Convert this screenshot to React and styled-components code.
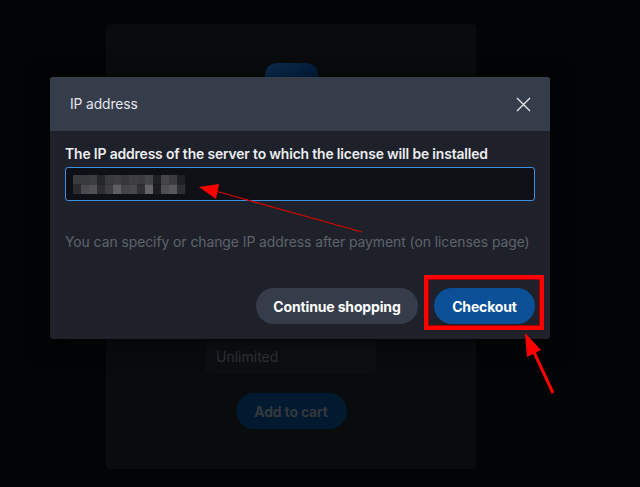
import React from "react";
import styled, { createGlobalStyle } from "styled-components";

const Global = createGlobalStyle`
  html, body {
    margin: 0;
    padding: 0;
    background: #030405;
  }
  body {
    font-family: Inter, "Noto Sans", sans-serif;
  }
`;

const Page = styled.div`
  position: relative;
  width: 640px;
  height: 487px;
  overflow: hidden;
  background: #030405;
  padding: 24px 0 0 106px;
  box-sizing: border-box;
`;

/* product card behind the dialog */
const ProductCard = styled.div`
  width: 370px;
  height: 445px;
  box-sizing: border-box;
  padding: 39px 0 40px;
  background: #0a0b0d;
  border-radius: 4px;
  display: flex;
  flex-direction: column;
  align-items: center;
`;

const ProductIcon = styled.div`
  width: 53px;
  height: 53px;
  border-radius: 12px;
  background: linear-gradient(135deg, #0b2c4e 0%, #021d3b 60%, #00163a 100%);
`;

const Spacer = styled.div`
  flex: 1;
`;

const PeriodField = styled.div`
  width: 170px;
  height: 33px;
  box-sizing: border-box;
  padding: 0 10px;
  border-radius: 4px;
  background: #0d0f12;
  color: #2f3236;
  font-size: 14px;
  display: flex;
  align-items: center;
`;

const CartButton = styled.button`
  margin-top: 20px;
  width: 111px;
  height: 36px;
  border: none;
  border-radius: 18px;
  background: #021a30;
  color: #33383f;
  font-family: inherit;
  font-size: 14px;
  font-weight: 700;
  letter-spacing: -0.2px;
`;

/* dialog */
const Dialog = styled.div`
  position: absolute;
  left: 50px;
  top: 77px;
  width: 500px;
  border-radius: 3px;
  background: #1e2129;
  box-shadow: 0 4px 24px rgba(0, 0, 0, 0.5);
`;

const DialogHeader = styled.div`
  height: 54px;
  box-sizing: border-box;
  padding: 0 19px 0 20px;
  background: #353c4a;
  border-radius: 3px 3px 0 0;
  display: flex;
  align-items: center;
  justify-content: space-between;
`;

const DialogTitle = styled.div`
  color: #e4e7ec;
  font-size: 13.8px;
  letter-spacing: -0.1px;
`;

const CloseButton = styled.button`
  width: 16px;
  height: 16px;
  padding: 0;
  border: none;
  background: none;
  display: flex;
  align-items: center;
  justify-content: center;
`;

const DialogBody = styled.div`
  position: relative;
  padding: 14px 15px 15px;
  display: flex;
  flex-direction: column;
`;

const FieldLabel = styled.label`
  color: #eceef2;
  font-size: 13.9px;
  font-weight: 600;
  line-height: 18px;
  letter-spacing: -0.15px;
  margin-bottom: 4px;
`;

const IpInput = styled.div`
  height: 34px;
  box-sizing: border-box;
  padding: 0 7px;
  border: 1px solid #3d8fe3;
  border-radius: 3px;
  background: #0e1015;
  display: flex;
  align-items: center;
`;

const Hint = styled.div`
  margin-top: 32px;
  color: #5e636d;
  font-size: 13.9px;
  line-height: 18px;
  letter-spacing: -0.05px;
`;

const Actions = styled.div`
  margin-top: 37px;
  display: flex;
  justify-content: flex-end;
  gap: 16px;
`;

const PillButton = styled.button`
  height: 36px;
  padding: 0 16px;
  min-width: ${(p) => (p.primary ? "101px" : "162px")};
  border: none;
  border-radius: 18px;
  background: ${(p) => (p.primary ? "#0b4f97" : "#353c4a")};
  color: #ffffff;
  font-family: inherit;
  font-size: 14px;
  font-weight: 700;
  letter-spacing: -0.15px;
`;

/* annotations drawn over the screenshot */
const HighlightBox = styled.div`
  position: absolute;
  right: 6px;
  bottom: 9px;
  width: 120px;
  height: 55px;
  box-sizing: border-box;
  border: 4px solid #ff0000;
  box-shadow: inset 0 0 0 1px #a40000;
  pointer-events: none;
`;

const Overlay = styled.svg`
  position: absolute;
  left: 0;
  top: 0;
  pointer-events: none;
`;

const blocks = [
  ["#3a3b3f", "#38393d", "#3d3d41", "#252629", "#3b3b3f", "#3e3e42", "#38383c", "#3f3f43", "#3c3c40", "#444448", "#1f2023", "#45454a", "#3b3b3f", "#1f2024"],
  ["#2b2b2e", "#4b4b4f", "#525256", "#2e2e31", "#3e3e42", "#606064", "#454549", "#48484c", "#303034", "#646468", "#1d1d20", "#4f4f53", "#58585c", "#2e2e31"],
];

const BlurredIp = () => (
  <svg width="113" height="19" viewBox="0 0 113 19">
    {blocks.map((row, r) =>
      row.map((c, i) => (
        <rect key={`${r}-${i}`} x={i * 8} y={r * 9.5} width="8.2" height="9.6" fill={c} />
      ))
    )}
  </svg>
);

const App = () => {
  return (
    <>
      <Global />
      <Page>
        <ProductCard>
          <ProductIcon />
          <Spacer />
          <PeriodField>Unlimited</PeriodField>
          <CartButton>Add to cart</CartButton>
        </ProductCard>

        <Dialog>
          <DialogHeader>
            <DialogTitle>IP address</DialogTitle>
            <CloseButton aria-label="Close">
              <svg width="15" height="15" viewBox="0 0 15 15">
                <path d="M1 1 L14 14 M14 1 L1 14" stroke="#e8eaee" strokeWidth="1.3" />
              </svg>
            </CloseButton>
          </DialogHeader>
          <DialogBody>
            <FieldLabel>The IP address of the server to which the license will be installed</FieldLabel>
            <IpInput>
              <BlurredIp />
            </IpInput>
            <Hint>You can specify or change IP address after payment (on licenses page)</Hint>
            <Actions>
              <PillButton>Continue shopping</PillButton>
              <PillButton primary>Checkout</PillButton>
            </Actions>
            <HighlightBox />
          </DialogBody>
        </Dialog>

        <Overlay width="640" height="487">
          <line x1="362" y1="232" x2="212" y2="190" stroke="#d80000" strokeWidth="1.2" />
          <polygon points="199,187 219,184 216,199" fill="#ff0000" />
          <line x1="553" y1="393" x2="533" y2="350" stroke="#ff0000" strokeWidth="3" />
          <polygon points="525,333 527,357 541,350" fill="#ff0000" />
        </Overlay>
      </Page>
    </>
  );
};

export default App;
